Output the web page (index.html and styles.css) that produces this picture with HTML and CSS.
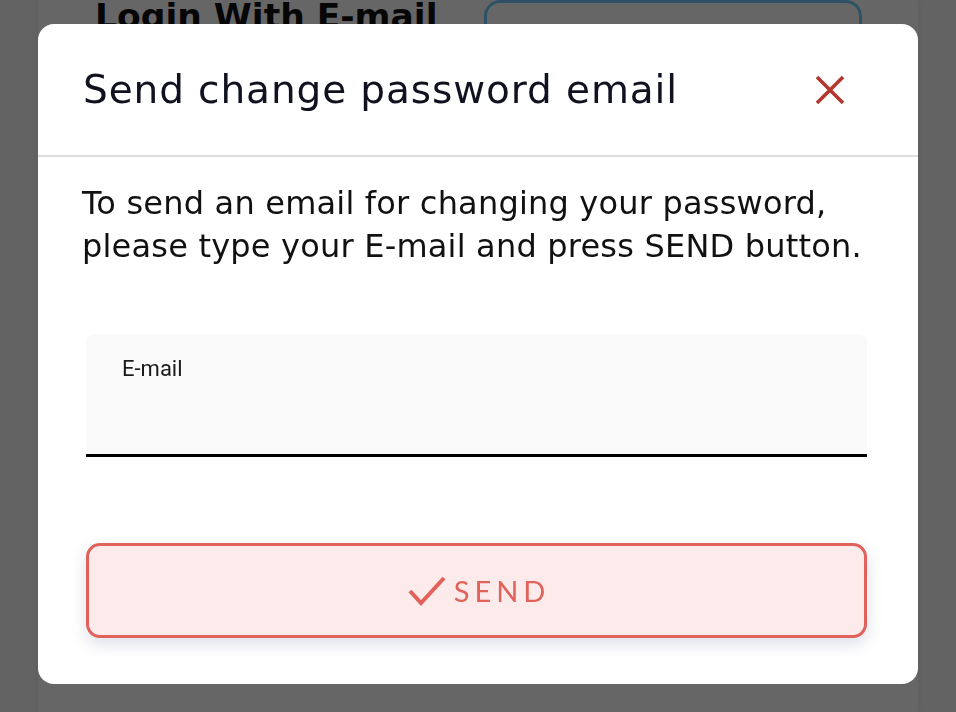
FILE: index.html
```html
<!DOCTYPE html>
<html lang="en">
<head>
<meta charset="utf-8">
<title>Send change password email</title>
<link rel="stylesheet" href="styles.css">
</head>
<body>
<div class="page">
  <div class="page-head">
    <h2 class="page-title">Login With E-mail</h2>
    <button class="page-btn" type="button">CLICK TO USE LINK</button>
  </div>
</div>
<div class="overlay">
  <div class="dialog" role="dialog" aria-labelledby="dlg-title">
    <div class="dialog-header">
      <h1 class="dialog-title" id="dlg-title">Send change password email</h1>
      <button class="close-btn" type="button" aria-label="Close">
        <svg width="30" height="30" viewBox="0 0 30 30"><path d="M2 2 L28 28 M28 2 L2 28" stroke="#b3372e" stroke-width="3.6" fill="none"/></svg>
      </button>
    </div>
    <div class="dialog-body">
      <p class="intro">To send an email for changing your password,<br>please type your E-mail and press SEND button.</p>
      <label class="field">
        <span class="field-label">E-mail</span>
        <input class="field-input" type="email">
      </label>
      <button class="send-btn" type="button">
        <svg class="check" width="38" height="30" viewBox="0 0 38 30"><path d="M2 15 L13 27 L36 2" stroke="#e0625a" stroke-width="4" fill="none"/></svg>
        <span class="send-text">SEND</span>
      </button>
    </div>
  </div>
</div>
</body>
</html>
```
FILE: styles.css
```css
html, body {
  margin: 0;
  padding: 0;
  height: 100%;
}
body {
  background: #f8f8f8;
  font-family: "DejaVu Sans", "Noto Sans", sans-serif;
  overflow: hidden;
}
.page {
  margin: 0 38px;
  height: 100%;
  background: #ffffff;
  box-shadow: 0 0 8px rgba(0,0,0,0.08);
}
.page-head {
  display: flex;
  align-items: flex-start;
  padding: 0 56px 0 57px;
  gap: 46px;
}
.page-title {
  margin: -4px 0 0 0;
  font-size: 34.5px;
  font-weight: 700;
  color: #111;
  white-space: nowrap;
}
.page-btn {
  margin-top: 0;
  width: 378px;
  height: 60px;
  border: 3px solid #73cbff;
  border-radius: 16px;
  background: #fff;
  color: #73cbff;
  font-family: "Lato", sans-serif;
  font-size: 24px;
  letter-spacing: 4px;
  padding-top: 22px;
}
.overlay {
  position: fixed;
  inset: 0;
  background: rgba(0,0,0,0.6);
  display: flex;
  align-items: center;
  justify-content: center;
}
.dialog {
  width: 880px;
  background: #fff;
  border-radius: 16px;
  overflow: hidden;
  margin-top: -4px;
}
.dialog-header {
  height: 131px;
  display: flex;
  align-items: center;
  justify-content: space-between;
  padding: 0 73px 0 45px;
  border-bottom: 2px solid #dedede;
}
.dialog-title {
  margin: 0;
  font-size: 39px;
  letter-spacing: 0.9px;
  font-weight: 400;
  color: #10121f;
}
.close-btn {
  border: 0;
  background: none;
  padding: 0;
  width: 30px;
  height: 30px;
  display: flex;
}
.dialog-body {
  padding: 25px 51px 46px 48px;
}
.intro {
  margin: 0 0 66px -4px;
  font-size: 32px;
  letter-spacing: 0.2px;
  line-height: 43px;
  color: #111;
}
.field {
  display: block;
  position: relative;
  height: 120px;
  background: #fafafa;
  border-radius: 8px 8px 0 0;
  border-bottom: 3px solid #000;
}
.field-label {
  position: absolute;
  left: 36px;
  top: 22px;
  font-family: "Roboto", sans-serif;
  font-size: 22px;
  color: #1a1a1a;
}
.field-input {
  position: absolute;
  left: 36px;
  right: 20px;
  bottom: 12px;
  border: 0;
  background: transparent;
  font-size: 24px;
  outline: none;
}
.send-btn {
  margin-top: 86px;
  width: 100%;
  height: 95px;
  border: 3px solid #e0625a;
  border-radius: 14px;
  background: #fdebec;
  box-shadow: 0 6px 16px rgba(70,80,140,0.18);
  display: flex;
  align-items: center;
  justify-content: center;
  gap: 8px;
  color: #e0625a;
  font-family: "Lato", sans-serif;
  font-size: 29px;
  letter-spacing: 5px;
}
.check {
  margin-top: 1px;
}
.send-text {
  margin-right: -5px;
}
```
